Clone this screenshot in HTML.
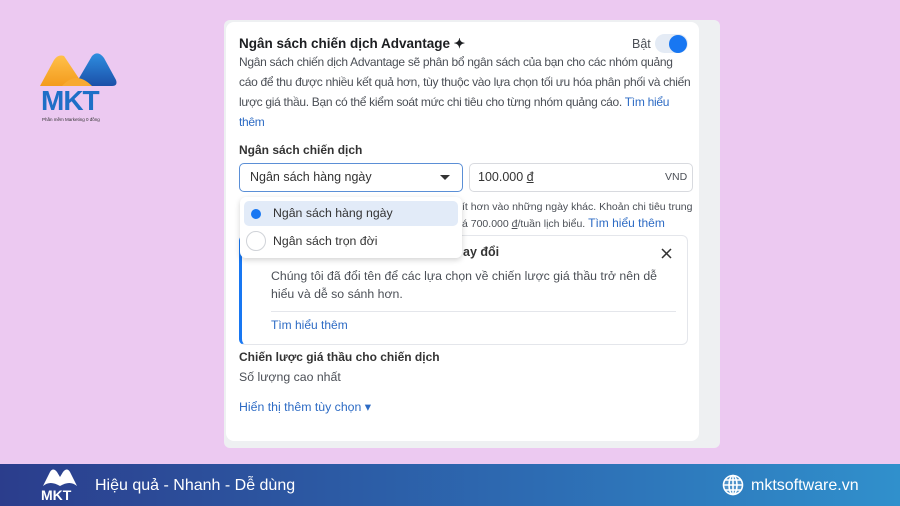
<!DOCTYPE html>
<html><head><meta charset="utf-8"><style>
*{margin:0;padding:0;box-sizing:border-box}
body{width:900px;height:506px;overflow:hidden;background:#ecc9f1;font-family:"Liberation Sans",sans-serif;position:relative;color:#1c1e21}
.abs{position:absolute}
.panel{left:224px;top:20px;width:496px;height:428px;background:#eef0f2;border-radius:6px}
.card{left:226px;top:22px;width:473px;height:419px;background:#fff;border-radius:8px}
.t{font-size:12px;color:#4b4f56;white-space:nowrap}
.link{color:#2d6bc4}
.footer{left:0;top:464px;width:900px;height:42px;background:linear-gradient(90deg,#2b3d8c,#2d6cb3 60%,#3090cc)}
</style></head><body>
<!-- logo -->
<svg class="abs" style="left:36px;top:50px" width="82" height="75" viewBox="0 0 82 75">
<defs><linearGradient id="o" x1="0" y1="0" x2="0" y2="1"><stop offset="0" stop-color="#ffc04a"/><stop offset="1" stop-color="#f39b1d"/></linearGradient>
<linearGradient id="b" x1="0" y1="0" x2="0" y2="1"><stop offset="0" stop-color="#2e8ee0"/><stop offset="1" stop-color="#1b4fa8"/></linearGradient></defs>
<path d="M4 36 L18 10 Q22 4 28 6 L44 30 L40 36 Z" fill="url(#o)"/>
<path d="M42 30 L56 6 Q62 0 68 8 L80 30 Q82 36 76 36 L46 36 Z" fill="url(#b)"/>
<path d="M26 36 Q40 20 56 36 Z" fill="#f7a932"/>
<text x="5" y="60" font-family="Liberation Sans" font-weight="bold" font-size="28" fill="#1e6fc7" letter-spacing="-1">MKT</text>
<text x="6" y="71" font-family="Liberation Sans" font-size="4.5" fill="#333">Phần mềm Marketing 0 đồng</text>
</svg>
<div class="abs panel"></div>
<div class="abs card"></div>
<div class="abs" style="left:239px;top:36px;font-size:13.5px;font-weight:bold;color:#1c1e21">Ngân sách chiến dịch Advantage ✦</div>
<div class="abs t" style="left:632px;top:37px;font-size:12.5px">Bật</div>
<div class="abs" style="left:655px;top:34px;width:33px;height:19px;border-radius:10px;background:#e4ebf5"></div>
<div class="abs" style="left:669px;top:35px;width:18px;height:18px;border-radius:9px;background:#1877f2"></div>
<div class="abs t" style="left:239px;top:52px;line-height:20px;font-size:12px;letter-spacing:-0.3px">Ngân sách chiến dịch Advantage sẽ phân bổ ngân sách của bạn cho các nhóm quảng<br>cáo để thu được nhiều kết quả hơn, tùy thuộc vào lựa chọn tối ưu hóa phân phối và chiến<br>lược giá thầu. Bạn có thể kiểm soát mức chi tiêu cho từng nhóm quảng cáo. <span class="link">Tìm hiểu</span><br><span class="link">thêm</span></div>
<div class="abs" style="left:239px;top:143px;font-size:12px;font-weight:bold;color:#333">Ngân sách chiến dịch</div>
<div class="abs" style="left:239px;top:163px;width:224px;height:29px;border:1px solid #5b8fd6;border-radius:5px"></div>
<div class="abs t" style="left:250px;top:170px;font-size:12.5px;color:#333">Ngân sách hàng ngày</div>
<div class="abs" style="left:440px;top:175px;border-left:5px solid transparent;border-right:5px solid transparent;border-top:5px solid #333"></div>
<div class="abs" style="left:469px;top:163px;width:224px;height:29px;border:1px solid #d8dadf;border-radius:5px"></div>
<div class="abs t" style="left:478px;top:170px;font-size:12.5px;color:#333">100.000 <span style="text-decoration:underline">đ</span></div>
<div class="abs t" style="left:665px;top:171px;font-size:10.5px">VND</div>
<div class="abs t" style="left:462px;top:199px;font-size:10.5px;line-height:16px">ít hơn vào những ngày khác. Khoản chi tiêu trung<br>á 700.000 <span style="text-decoration:underline">đ</span>/tuần lịch biểu. <span class="link" style="font-size:12px">Tìm hiểu thêm</span></div>
<!-- info box -->
<div class="abs" style="left:239px;top:235px;width:449px;height:110px;border:1px solid #e4e6eb;border-left:3px solid #1877f2;border-radius:6px"></div>
<div class="abs" style="left:463px;top:245px;font-size:12.5px;font-weight:bold;color:#333">ay đổi</div>
<svg class="abs" style="left:661px;top:248px" width="11" height="11" viewBox="0 0 11 11" stroke="#333" stroke-width="1.5"><path d="M1 1L10 10M10 1L1 10"/></svg>
<div class="abs t" style="left:271px;top:267px;font-size:12.3px;line-height:18px">Chúng tôi đã đổi tên để các lựa chọn về chiến lược giá thầu trở nên dễ<br>hiểu và dễ so sánh hơn.</div>
<div class="abs" style="left:271px;top:311px;width:405px;height:1px;background:#e4e6eb"></div>
<div class="abs t link" style="left:271px;top:318px">Tìm hiểu thêm</div>
<!-- dropdown -->
<div class="abs" style="left:240px;top:197px;width:222px;height:61px;background:#fff;border-radius:6px;box-shadow:0 2px 6px rgba(0,0,0,.18)"></div>
<div class="abs" style="left:244px;top:201px;width:214px;height:25px;background:#e2ebf8;border-radius:5px"></div>
<div class="abs" style="left:251px;top:209px;width:10px;height:10px;border-radius:5px;background:#1877f2"></div>
<div class="abs" style="left:246px;top:231px;width:20px;height:20px;border-radius:10px;border:1px solid #d0d3d8"></div>
<div class="abs t" style="left:273px;top:206px;font-size:12.3px;color:#333">Ngân sách hàng ngày</div>
<div class="abs t" style="left:273px;top:234px;font-size:12.3px;color:#333">Ngân sách trọn đời</div>
<div class="abs" style="left:239px;top:350px;font-size:12px;font-weight:bold;color:#333">Chiến lược giá thầu cho chiến dịch</div>
<div class="abs t" style="left:239px;top:370px;font-size:12.3px">Số lượng cao nhất</div>
<div class="abs t link" style="left:239px;top:400px;font-size:12.3px">Hiển thị thêm tùy chọn ▾</div>
<!-- footer -->
<div class="abs footer"></div>
<svg class="abs" style="left:40px;top:467px" width="40" height="37" viewBox="0 0 40 37">
<path d="M3 19 L10 5 Q13 0 17 5 L20 10 L23 5 Q27 0 30 5 L37 19 Q30 13 20 19 Q10 13 3 19 Z" fill="#fff"/>
<text x="1" y="33" font-family="Liberation Sans" font-weight="bold" font-size="14" fill="#fff">MKT</text>
</svg>
<div class="abs" style="left:95px;top:477px;font-size:16px;color:#fff">Hiệu quả - Nhanh - Dễ dùng</div>
<svg class="abs" style="left:722px;top:474px" width="22" height="22" viewBox="0 0 22 22" fill="none" stroke="#fff" stroke-width="1.6">
<circle cx="11" cy="11" r="9.5" fill="#fff" fill-opacity=".15"/><ellipse cx="11" cy="11" rx="4" ry="9.5"/><path d="M1.5 11h19M3 6h16M3 16h16M11 1.5v19"/></svg>
<div class="abs" style="left:751px;top:477px;font-size:16px;color:#fff">mktsoftware.vn</div>
</body></html>
